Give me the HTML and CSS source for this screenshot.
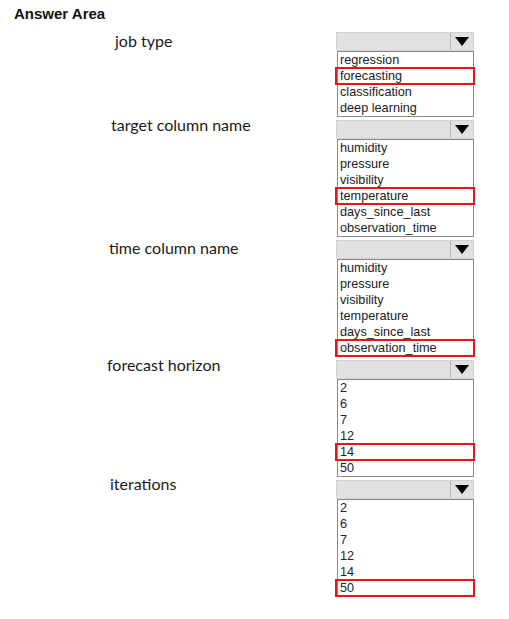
FILE: index.html
```html
<!DOCTYPE html>
<html lang="en">
<head>
<meta charset="utf-8">
<title>Answer Area</title>
<link rel="stylesheet" href="styles.css">
</head>
<body>
<main class="answer-area">
  <h1 class="title">Answer Area</h1>
  <div class="rows">
    <div class="row">
      <div class="label">job type</div>
      <div class="dropdown">
        <div class="dd-head"><span class="dd-field"></span><span class="dd-btn"><svg width="14" height="9" viewBox="0 0 14 9"><path d="M0 0H14L7 9Z" fill="#000"/></svg></span></div>
        <ul class="dd-list">
          <li>regression</li>
          <li class="selected">forecasting</li>
          <li>classification</li>
          <li>deep learning</li>
        </ul>
      </div>
    </div>
    <div class="row">
      <div class="label">target column name</div>
      <div class="dropdown">
        <div class="dd-head"><span class="dd-field"></span><span class="dd-btn"><svg width="14" height="9" viewBox="0 0 14 9"><path d="M0 0H14L7 9Z" fill="#000"/></svg></span></div>
        <ul class="dd-list">
          <li>humidity</li>
          <li>pressure</li>
          <li>visibility</li>
          <li class="selected">temperature</li>
          <li>days_since_last</li>
          <li>observation_time</li>
        </ul>
      </div>
    </div>
    <div class="row">
      <div class="label">time column name</div>
      <div class="dropdown">
        <div class="dd-head"><span class="dd-field"></span><span class="dd-btn"><svg width="14" height="9" viewBox="0 0 14 9"><path d="M0 0H14L7 9Z" fill="#000"/></svg></span></div>
        <ul class="dd-list">
          <li>humidity</li>
          <li>pressure</li>
          <li>visibility</li>
          <li>temperature</li>
          <li>days_since_last</li>
          <li class="selected">observation_time</li>
        </ul>
      </div>
    </div>
    <div class="row">
      <div class="label">forecast horizon</div>
      <div class="dropdown">
        <div class="dd-head"><span class="dd-field"></span><span class="dd-btn"><svg width="14" height="9" viewBox="0 0 14 9"><path d="M0 0H14L7 9Z" fill="#000"/></svg></span></div>
        <ul class="dd-list">
          <li>2</li>
          <li>6</li>
          <li>7</li>
          <li>12</li>
          <li class="selected">14</li>
          <li>50</li>
        </ul>
      </div>
    </div>
    <div class="row">
      <div class="label">iterations</div>
      <div class="dropdown">
        <div class="dd-head"><span class="dd-field"></span><span class="dd-btn"><svg width="14" height="9" viewBox="0 0 14 9"><path d="M0 0H14L7 9Z" fill="#000"/></svg></span></div>
        <ul class="dd-list">
          <li>2</li>
          <li>6</li>
          <li>7</li>
          <li>12</li>
          <li>14</li>
          <li class="selected">50</li>
        </ul>
      </div>
    </div>
  </div>
</main>
</body>
</html>
```

FILE: styles.css
```css
html, body {
  margin: 0;
  padding: 0;
  background: #ffffff;
}

body {
  font-family: "Liberation Sans", Arial, sans-serif;
  color: #1a1a1a;
}

.answer-area {
  padding-top: 5px;
}

.title {
  margin: 0 0 0 14px;
  font-family: "Liberation Sans", Arial, sans-serif;
  font-size: 15px;
  font-weight: bold;
  line-height: 18px;
  color: #111111;
}

.rows {
  display: flex;
  flex-direction: column;
  gap: 3px;
  margin-top: 9px;
}

.row {
  display: grid;
  grid-template-columns: 336px 138px;
  align-items: start;
}

.label {
  font-family: Lato, "Open Sans", sans-serif;
  font-size: 16px;
  line-height: 18px;
  color: #1a1a1a;
  white-space: nowrap;
}

.row:nth-child(1) .label { padding-left: 115px; margin-top: 0; }
.row:nth-child(2) .label { padding-left: 111px; margin-top: -4px; }
.row:nth-child(3) .label { padding-left: 109px; margin-top: -1px; }
.row:nth-child(4) .label { padding-left: 107px; margin-top: -4px; }
.row:nth-child(5) .label { padding-left: 110px; margin-top: -5px; }

.dropdown {
  display: flex;
  flex-direction: column;
}

.dd-head {
  display: flex;
  height: 19px;
  box-sizing: border-box;
  background: #e1e1e1;
  border: 1px solid #d2d2d2;
}

.dd-field {
  flex: 1;
}

.dd-btn {
  width: 22px;
  border-left: 1px solid #b4b4b4;
  display: flex;
  align-items: center;
  justify-content: center;
}

.dd-list {
  list-style: none;
  margin: 0 0 0 1px;
  padding: 0;
  width: 137px;
  box-sizing: border-box;
  border: 1px solid #8a8a8a;
  background: #ffffff;
}

.dd-list li {
  position: relative;
  height: 16px;
  line-height: 16px;
  padding-left: 2px;
  font-size: 12.7px;
  color: #222222;
  white-space: nowrap;
}

.dd-list li.selected::after {
  content: "";
  position: absolute;
  top: -1px;
  bottom: -1px;
  left: -3px;
  right: -2px;
  border: 2px solid #e2141c;
}
```
